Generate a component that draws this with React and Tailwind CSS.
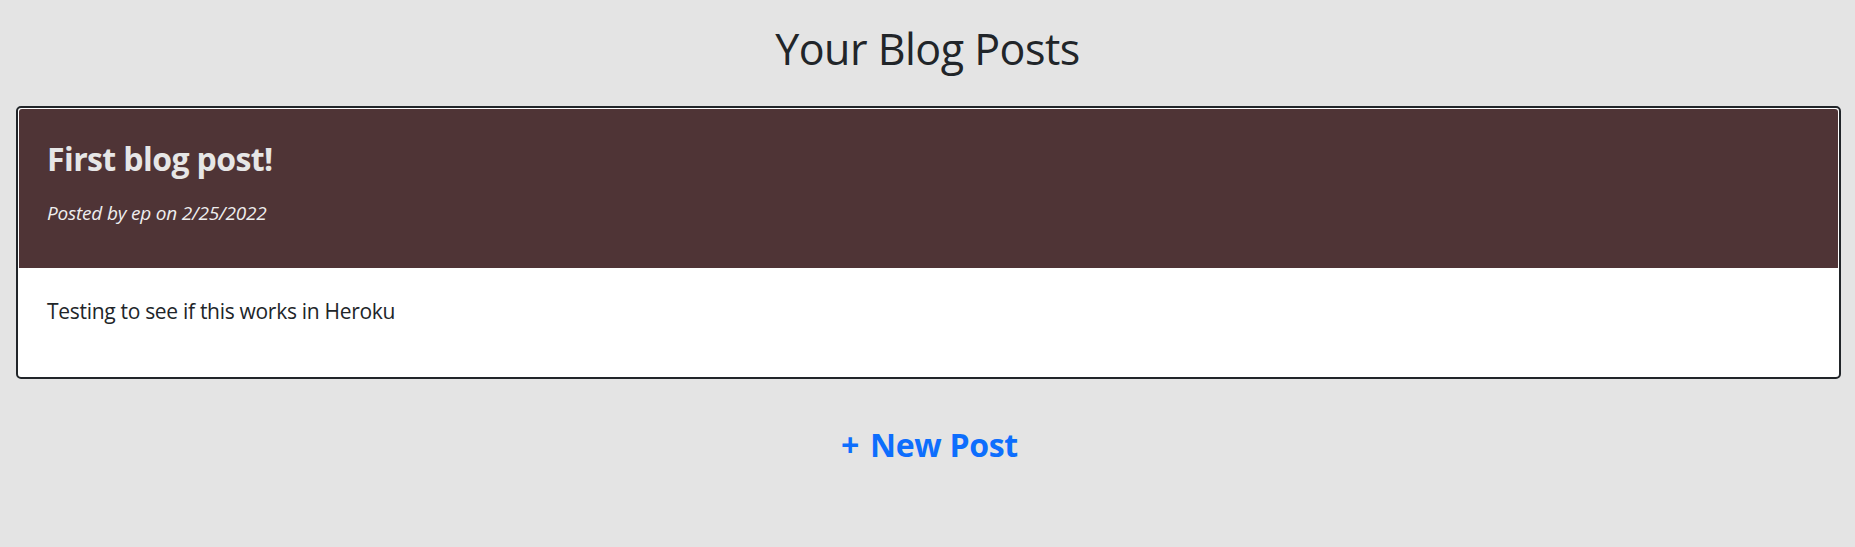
export default function App() {
  return (
    <div className="w-full h-[547px] bg-[#e4e4e4] font-['Open_Sans',sans-serif] overflow-hidden">
      <h1 className="text-center text-[43px] leading-[50px] pt-[24px] text-[#212529] font-medium tracking-[-0.5px]">
        Your Blog Posts
      </h1>
      <div className="mt-[32px] ml-[16px] mr-[14px] border-2 border-[#212529] rounded-[5px] bg-white p-px">
        <div className="bg-[#4f3436] h-[159px] rounded-t-[3px] pl-[28px] pt-[28px]">
          <h2 className="text-[32px] leading-[44px] font-bold text-[#e6e6e6] tracking-[-0.6px]">
            First blog post!
          </h2>
          <p className="mt-[19px] text-[19px] leading-[26px] italic text-[#eeeeee] tracking-[-0.2px]">
            Posted by ep on 2/25/2022
          </p>
        </div>
        <div className="h-[108px] pl-[28px] pt-[28px]">
          <p className="text-[21px] leading-[30px] text-[#212529] tracking-[-0.3px]">
            Testing to see if this works in Heroku
          </p>
        </div>
      </div>
      <div className="mt-[45px] flex justify-center pl-[4px]">
        <a href="#" className="text-[32px] leading-[42px] font-bold text-[#0d6efd] tracking-[-0.3px]">
          <span className="mr-[3px]">+</span> New Post
        </a>
      </div>
    </div>
  );
}
